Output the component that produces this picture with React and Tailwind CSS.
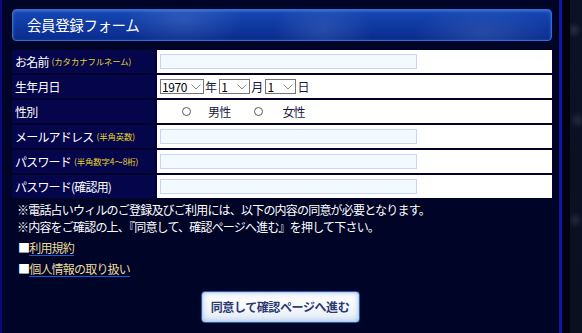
import React from 'react';

const Label = ({ children, note }) => (
  <div className="w-[143px] shrink-0 bg-[#05054c] flex items-center pl-[3px] text-white text-[12px] tracking-[-0.8px] leading-none">
    <span>{children}</span>
    {note && <span className="ml-[3px] text-[8.4px] tracking-[-0.1px] text-[#e2d428]">{note}</span>}
  </div>
);

const TextInput = () => (
  <div className="ml-[3px] w-[257px] h-[15px] bg-[#f2f9ff] border border-[#c9d3f4]" />
);

const Select = ({ value, w }) => (
  <div className={`${w} h-[15px] bg-white border border-[#767676] flex items-center justify-between pl-[1px] pr-[2px]`}>
    <span className="text-[12px] leading-none text-black tracking-[-0.4px]">{value}</span>
    <svg width="10" height="6" viewBox="0 0 10 6" fill="none" stroke="#8a8a8a" strokeWidth="1">
      <path d="M0.5 0.5 L5 5 L9.5 0.5" />
    </svg>
  </div>
);

const Radio = () => (
  <span className="inline-block w-[9px] h-[9px] rounded-full border border-[#5a5a5a] bg-white" />
);

const Row = ({ label, note, children }) => (
  <div className="flex gap-[2px] h-[23px]">
    <Label note={note}>{label}</Label>
    <div className="flex-1 bg-white flex items-center">{children}</div>
  </div>
);

export default function App() {
  return (
    <div className="w-[582px] h-[333px] overflow-hidden flex bg-[#000427] font-['Noto_Sans_CJK_JP','Noto_Sans',sans-serif]">
      <div className="w-[2px] shrink-0 bg-[#0b0b78]" />

      <div className="flex-1 pl-[10px] pr-[7px] pt-[9px]">
        {/* header */}
        <div className="h-[32px] rounded-[4px] border border-[#2f6cd4] shadow-[inset_0_1px_3px_rgba(120,170,255,0.5)] bg-[radial-gradient(ellipse_60px_30px_at_170px_10px,rgba(140,170,230,0.22),transparent),radial-gradient(ellipse_50px_30px_at_310px_20px,rgba(140,170,230,0.2),transparent),radial-gradient(ellipse_70px_30px_at_470px_25px,rgba(140,170,230,0.2),transparent),linear-gradient(#1648b4,#0a2b8e)] flex items-center pl-[14px]">
          <span className="text-white text-[14.5px] tracking-[-0.4px] leading-none">会員登録フォーム</span>
        </div>

        {/* form table */}
        <div className="mt-[9px] flex flex-col gap-[2px] bg-[#02022a]">
          <Row label="お名前" note="(カタカナフルネーム)">
            <TextInput />
          </Row>
          <Row label="生年月日">
            <div className="ml-[3px] flex items-center text-[12px] tracking-[-0.8px] leading-none text-[#1a1a40]">
              <Select value="1970" w="w-[44px]" />
              <span className="ml-[1px]">年</span>
              <span className="ml-[3px]"><Select value="1" w="w-[31px]" /></span>
              <span className="ml-[1px]">月</span>
              <span className="ml-[3px]"><Select value="1" w="w-[31px]" /></span>
              <span className="ml-[1px]">日</span>
            </div>
          </Row>
          <Row label="性別">
            <div className="ml-[25px] flex items-center text-[12px] tracking-[-0.8px] leading-none text-[#1a1a40]">
              <Radio />
              <span className="ml-[17px]">男性</span>
              <span className="ml-[24px] flex"><Radio /></span>
              <span className="ml-[19px]">女性</span>
            </div>
          </Row>
          <Row label="メールアドレス" note="(半角英数)">
            <TextInput />
          </Row>
          <Row label="パスワード" note="(半角数字4～8桁)">
            <TextInput />
          </Row>
          <Row label="パスワード(確認用)">
            <TextInput />
          </Row>
        </div>

        {/* notes */}
        <div className="mt-[3px] pl-[5px] text-white text-[12px] tracking-[-0.8px] leading-[17px]">
          <p>※電話占いウィルのご登録及びご利用には、以下の内容の同意が必要となります。</p>
          <p>※内容をご確認の上、『同意して、確認ページへ進む』を押して下さい。</p>
          <p className="mt-[3px] pl-[1px] leading-[20px]">
            ■<a href="#" className="text-[#e8dc9c] underline decoration-[#1a5ad8] underline-offset-[2px]">利用規約</a>
          </p>
          <p className="mt-[1px] pl-[1px] leading-[20px]">
            ■<a href="#" className="text-[#e8dc9c] underline decoration-[#1a5ad8] underline-offset-[2px]">個人情報の取り扱い</a>
          </p>
        </div>

        {/* button */}
        <div className="mt-[12px] flex justify-center pr-[4px]">
          <button className="w-[159px] h-[32px] rounded-[4px] border border-[#2a5aa6] bg-[linear-gradient(#ffffff,#f3f7fc_60%,#dfe9f6)] shadow-[inset_0_0_0_1px_#b6d0f0,inset_0_0_6px_rgba(90,140,210,0.55)] flex items-center justify-center">
            <span className="text-[12px] font-bold tracking-[-0.4px] leading-none text-[#2c3a70]">同意して確認ページへ進む</span>
          </button>
        </div>
      </div>

      <div className="w-[3px] shrink-0 bg-[#0a1aa2]" />
      <div className="w-[8px] shrink-0 bg-[#00030f]" />
      <div className="w-[12px] shrink-0 bg-[radial-gradient(circle_at_4px_30px,rgba(80,90,120,0.35),transparent_8px),radial-gradient(circle_at_8px_120px,rgba(80,90,120,0.3),transparent_9px),radial-gradient(circle_at_5px_220px,rgba(80,90,120,0.3),transparent_8px),linear-gradient(#0c1226,#0a1020)]" />
    </div>
  );
}
